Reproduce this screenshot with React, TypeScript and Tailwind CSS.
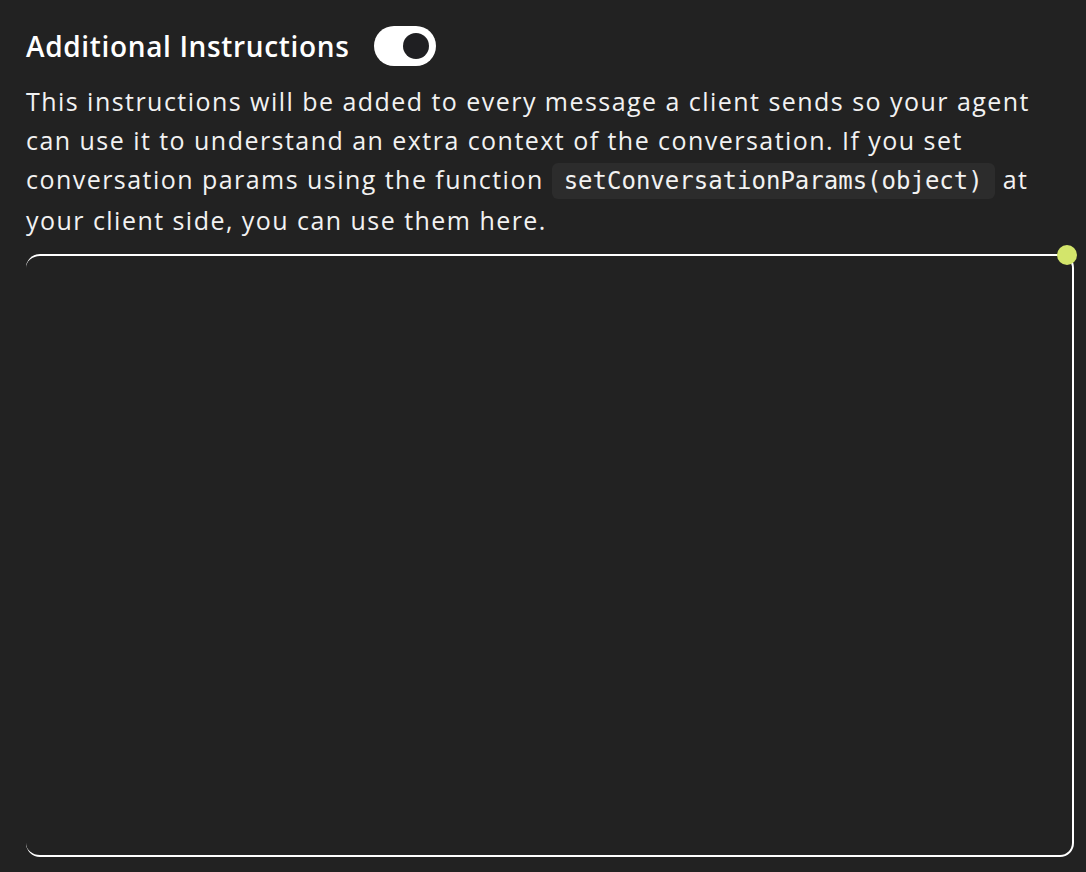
export default function App() {
  return (
    <div
      className="min-h-[872px] w-full bg-[#222222] pl-[26px] pr-[12px] pt-[26px] text-white"
      style={{ fontFamily: '"Open Sans", "Noto Sans", sans-serif' }}
    >
      <div className="flex items-center gap-[25px]">
        <h2 className="text-[28px] font-semibold leading-[40px] tracking-[0.65px]">Additional Instructions</h2>
        <button
          type="button"
          className="flex h-[40px] w-[62px] items-center justify-end rounded-full bg-white px-[7px]"
        >
          <span className="h-[26px] w-[26px] rounded-full bg-[#1f1f22]" />
        </button>
      </div>
      <p className="mt-[16px] whitespace-nowrap text-[25px] leading-[39px] tracking-[1.46px] text-[#f2f2f2]">
        This instructions will be added to every message a client sends so your agent
        <br />
        can use it to understand an extra context of the conversation. If you set
        <br />
        conversation params using the function{" "}
        <code className="rounded-[6px] bg-[#2c2c2c] px-[12px] py-[4px] font-['DejaVu_Sans_Mono',monospace] text-[24px] tracking-normal">
          setConversationParams(object)
        </code>{" "}
        at
        <br />
        your client side, you can use them here.
      </p>
      <div className="relative mt-[14px]">
        <textarea className="block h-[603px] w-full resize-none rounded-[14px] border-2 border-l-0 border-white bg-transparent outline-none" />
        <span className="absolute right-[-3px] top-[-9px] h-[20px] w-[20px] rounded-full bg-[#d3e56b]" />
      </div>
    </div>
  );
}
